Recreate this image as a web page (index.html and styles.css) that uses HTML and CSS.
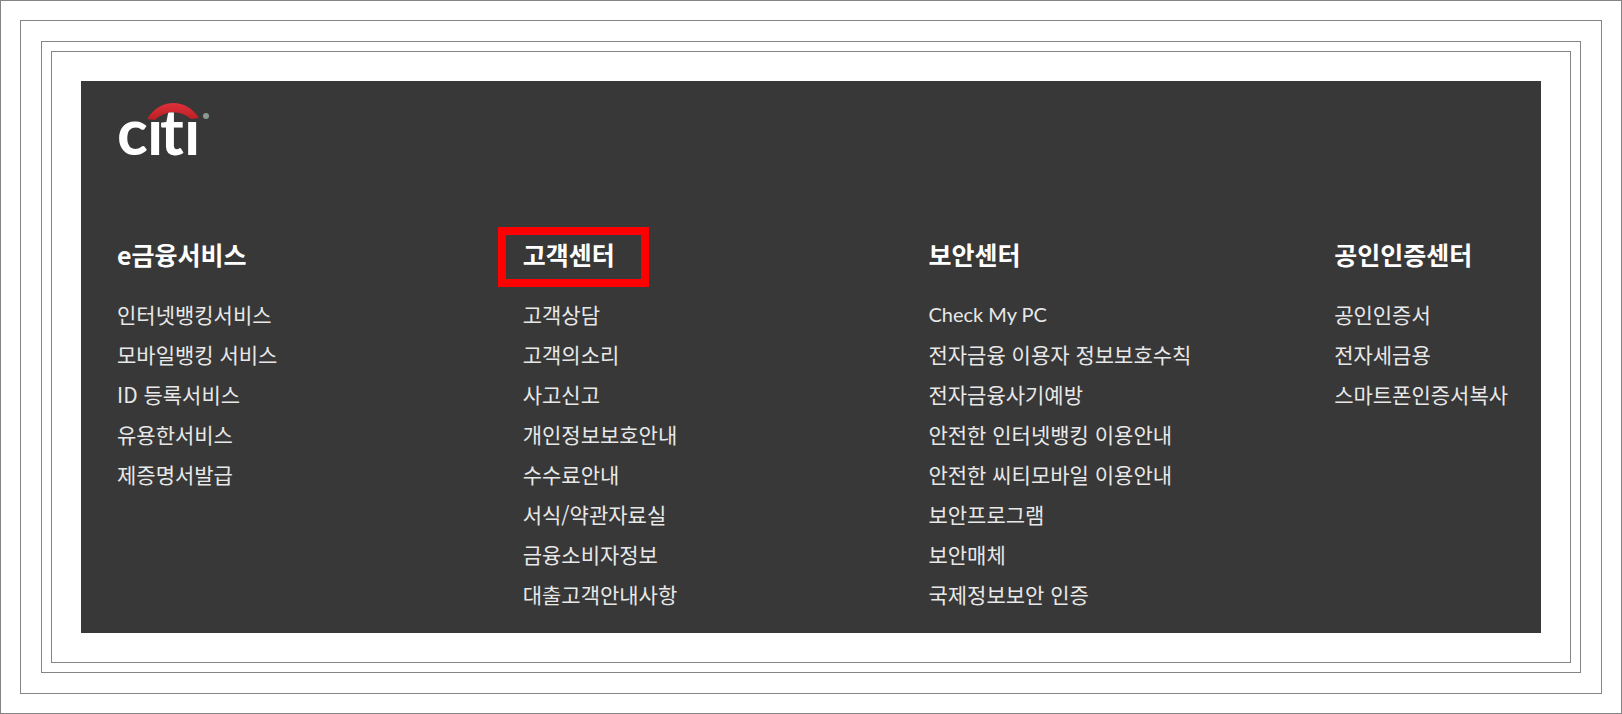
FILE: index.html
```html
<!DOCTYPE html>
<html lang="ko">
<head>
    <meta charset="UTF-8">
    <meta name="viewport" content="width=device-width, initial-scale=1.0">
    <title>citi</title>
    <link rel="stylesheet" href="styles.css">
</head>
<body>
    <div class="frame frame-outer">
        <div class="frame frame-second">
            <div class="frame frame-third">
                <div class="frame frame-inner">
                    <main class="sitemap">
                        <!-- Logo -->
                        <a class="logo" href="#" aria-label="citi">
                            <svg width="96" height="100" viewBox="0 -16 96 100" aria-hidden="true">
                                <defs>
                                    <linearGradient id="arc" x1="0" y1="0" x2="0" y2="1">
                                        <stop offset="0" stop-color="#e0303a"/>
                                        <stop offset="1" stop-color="#b81f24"/>
                                    </linearGradient>
                                </defs>
                                <path d="M30 22C43 1 69 1 82 21L74 22C63 13 49 13 38 23Z" fill="url(#arc)"/>
                                <text class="logo-text" x="0 30 43 67" y="58">cıtı</text>
                                <circle cx="89" cy="19" r="3" fill="#8a9a90"/>
                            </svg>
                        </a>

                        <!-- Menu columns -->
                        <nav class="menu">
                            <section class="menu-col">
                                <h2 class="menu-title">e금융서비스</h2>
                                <ul class="menu-list">
                                    <li><a href="#">인터넷뱅킹서비스</a></li>
                                    <li><a href="#">모바일뱅킹 서비스</a></li>
                                    <li><a href="#">ID 등록서비스</a></li>
                                    <li><a href="#">유용한서비스</a></li>
                                    <li><a href="#">제증명서발급</a></li>
                                </ul>
                            </section>
                            <section class="menu-col">
                                <h2 class="menu-title marked">고객센터</h2>
                                <ul class="menu-list">
                                    <li><a href="#">고객상담</a></li>
                                    <li><a href="#">고객의소리</a></li>
                                    <li><a href="#">사고신고</a></li>
                                    <li><a href="#">개인정보보호안내</a></li>
                                    <li><a href="#">수수료안내</a></li>
                                    <li><a href="#">서식/약관자료실</a></li>
                                    <li><a href="#">금융소비자정보</a></li>
                                    <li><a href="#">대출고객안내사항</a></li>
                                </ul>
                            </section>
                            <section class="menu-col">
                                <h2 class="menu-title">보안센터</h2>
                                <ul class="menu-list">
                                    <li><a class="latin" href="#">Check My PC</a></li>
                                    <li><a href="#">전자금융 이용자 정보보호수칙</a></li>
                                    <li><a href="#">전자금융사기예방</a></li>
                                    <li><a href="#">안전한 인터넷뱅킹 이용안내</a></li>
                                    <li><a href="#">안전한 씨티모바일 이용안내</a></li>
                                    <li><a href="#">보안프로그램</a></li>
                                    <li><a href="#">보안매체</a></li>
                                    <li><a href="#">국제정보보안 인증</a></li>
                                </ul>
                            </section>
                            <section class="menu-col">
                                <h2 class="menu-title">공인인증센터</h2>
                                <ul class="menu-list">
                                    <li><a href="#">공인인증서</a></li>
                                    <li><a href="#">전자세금용</a></li>
                                    <li><a href="#">스마트폰인증서복사</a></li>
                                </ul>
                            </section>
                        </nav>
                    </main>
                </div>
            </div>
        </div>
    </div>
</body>
</html>
```

FILE: styles.css
```css
* {
    margin: 0;
    padding: 0;
    box-sizing: border-box;
}

body {
    background: #fff;
    font-family: "Noto Sans CJK KR", sans-serif;
}

/* Nested frames */
.frame {
    border: 1px solid #858585;
}

.frame-outer {
    padding: 19px;
}

.frame-second {
    padding: 20px;
}

.frame-third {
    padding: 9px;
}

.frame-inner {
    padding: 29px;
}

/* Dark panel */
.sitemap {
    padding: 0 4px 19px 36px;
    background: #383838;
    color: #fff;
}

.logo {
    display: block;
    width: 96px;
    height: 100px;
}

.logo svg {
    display: block;
}

.logo-text {
    font-family: Lato, sans-serif;
    font-size: 64px;
    font-weight: 700;
    fill: #fff;
}

.menu {
    display: grid;
    grid-template-columns: repeat(3, 2fr) 1fr;
    margin-top: 53px;
}

.menu-col {
    white-space: nowrap;
}

.menu-title {
    position: relative;
    width: fit-content;
    margin-bottom: 20px;
    font-size: 25px;
    font-weight: 700;
    line-height: 40px;
}

/* Red box around the title */
.marked::after {
    content: "";
    position: absolute;
    inset: -7px -34px -13px -25px;
    border: 8px solid #f00;
}

.menu-list {
    list-style: none;
}

.menu-list a {
    display: block;
    width: fit-content;
    color: #e8e8e8;
    font-size: 21px;
    line-height: 40px;
    text-decoration: none;
}

.menu-list .latin {
    font-family: Lato, "Noto Sans CJK KR", sans-serif;
    font-size: 20px;
}
```
